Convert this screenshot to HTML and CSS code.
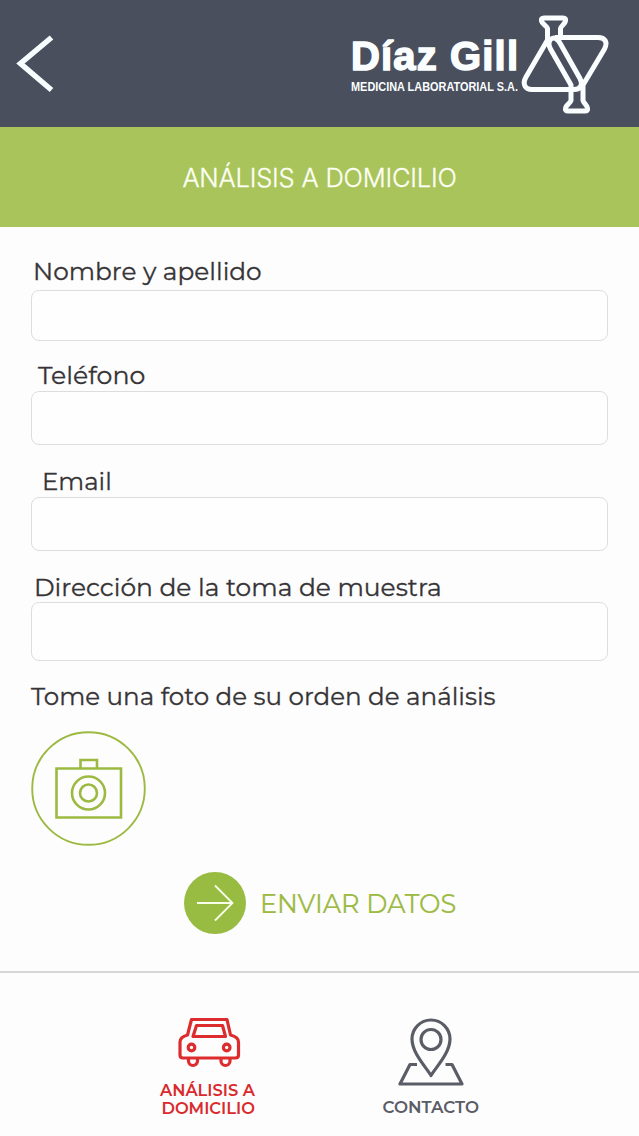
FILE: index.html
```html
<!DOCTYPE html>
<html lang="es">

<head>
    <meta charset="UTF-8">
    <meta name="viewport" content="width=device-width, initial-scale=1.0">
    <title>Análisis a domicilio</title>
    <link rel="stylesheet" href="styles.css">
</head>

<body>

    <header class="topbar">
        <a class="back" href="#" aria-label="Volver">
            <svg width="40" height="60" viewBox="0 0 40 60">
                <path d="M36.500 4.500L5.500 30.500L36.500 57" />
            </svg>
        </a>
        <svg class="logo" width="260" height="104" viewBox="0 0 260 104">
            <text class="logo_name" x="1" y="57" textLength="167" lengthAdjust="spacing">Díaz Gill</text>
            <text class="logo_sub" x="1" y="78" textLength="167" lengthAdjust="spacingAndGlyphs">MEDICINA LABORATORIAL S.A.</text>
            <!-- matraces -->
            <path d="M210.500 24V15.500C211 13 215 11 215.500 8C216 6 215 5 213 5H194C192 5 191 6 191.500 8C192 11 197 13 197.500 15.500V27L176 64C172 71 175 76.500 182 76.500H224C231 76.500 233 71 230 65.500L210.500 31C207 24 203 24 200 27C198 30 199 33 200.500 36L221 72V87.500C220.500 90 216 92 215.500 95C215 97 216 98 218 98H235C237 98 238 97 237.500 95C237 92 233.500 90 233 87.500V72L254.500 36C258 29 255 24.500 248 24.500H205" />
        </svg>
    </header>

    <h1>ANÁLISIS A DOMICILIO</h1>

    <form class="datos">
        <label class="nombre" for="nombre">Nombre y apellido</label>
        <input class="in_nombre" id="nombre" type="text">

        <label class="telefono" for="telefono">Teléfono</label>
        <input class="in_telefono" id="telefono" type="tel">

        <label class="email" for="email">Email</label>
        <input class="in_email" id="email" type="email">

        <label class="direccion" for="direccion">Dirección de la toma de muestra</label>
        <input class="in_direccion" id="direccion" type="text">

        <p class="foto_txt">Tome una foto de su orden de análisis</p>
        <button class="foto" type="button" aria-label="Tomar foto">
            <svg width="115" height="115" viewBox="0 0 115 115">
                <circle class="aro" cx="57.500" cy="57.500" r="56.300" />
                <path d="M25.500 37.500H90V86.500H25.500ZM49.500 37V29H66V37" />
                <circle cx="57.500" cy="62" r="16.500" />
                <circle cx="57.500" cy="62" r="8.500" />
            </svg>
        </button>

        <button class="enviar" type="button">
            <svg width="62" height="62" viewBox="0 0 62 62">
                <circle cx="31" cy="31" r="31" />
                <path d="M13 31H48.500M31 13.500L48.500 31L31 48.500" />
            </svg>
            <span>ENVIAR DATOS</span>
        </button>
    </form>

    <nav class="tabs">
        <a class="tab activo" href="#">
            <svg width="64" height="54" viewBox="0 0 64 54">
                <path d="M14.500 2.500H50L53.500 18Q61.500 20 61.500 25V38Q61.500 41 58.500 41H6Q3 41 3 38V25Q3 20 10.500 18ZM19.500 8.500H45.500L48.500 19.500H16ZM11.500 41V44A4.500 4.500 0 0 0 20.500 44V41M44 41V44A4.500 4.500 0 0 0 53 44V41" />
                <circle cx="14.500" cy="30.500" r="3.300" />
                <circle cx="49.700" cy="30.500" r="3.300" />
            </svg>
            <span class="tab_txt dos">ANÁLISIS A<br>DOMICILIO</span>
        </a>
        <a class="tab" href="#">
            <svg width="66" height="70" viewBox="0 0 66 70">
                <path d="M33 58.500C28 50 14 36 14 22A19 19 0 0 1 52 22C52 36 38 50 33 58.500ZM19 47.500H12L2 67H64L54 47.500H47.500" />
                <circle cx="33" cy="22.500" r="10" />
            </svg>
            <span class="tab_txt uno">CONTACTO</span>
        </a>
    </nav>

</body>

</html>
```
FILE: styles.css
```css
* {
    box-sizing: border-box;
}

body {
    margin: 0;
    height: 1136px;
    display: flex;
    flex-direction: column;
    background-color: #fefdfe;
    font-family: Montserrat, Inter, sans-serif;
    color: #363436;
}

svg {
    display: block;
    fill: none;
    flex: none;
}

button {
    padding: 0;
    border: 0;
    background-color: transparent;
    font-family: inherit;
}

a {
    text-decoration: none;
}

.topbar {
    height: 127px;
    padding: 13px 29px 0 15px;
    display: flex;
    justify-content: space-between;
    background-color: #4a4f5e;
}

.back {
    padding-top: 20px;
}

.back path {
    stroke: #f5ffff;
    stroke-width: 5.500;
}

.logo path {
    stroke: #fafeff;
    stroke-width: 5;
    stroke-linejoin: round;
}

.logo text {
    fill: #fafeff;
    font-family: "Liberation Sans", Arial, sans-serif;
    font-weight: bold;
}

.logo_name {
    font-size: 40px;
    stroke: #fafeff;
    stroke-width: 1.500;
}

.logo_sub {
    font-size: 12.500px;
}

h1 {
    margin: 0;
    height: 100px;
    line-height: 102px;
    text-align: center;
    background-color: #a9c45b;
    color: #fdfff5;
    font-family: Inter, sans-serif;
    font-size: 25.500px;
    font-weight: 300;
    letter-spacing: -0.200px;
    -webkit-text-stroke: 0.300px;
}

.datos {
    height: 744px;
    padding: 30px 31px 0;
    display: flex;
    flex-direction: column;
}

label,
.foto_txt {
    height: 30px;
    margin: 0;
    flex: none;
    font-size: 24.800px;
    line-height: 30px;
    white-space: nowrap;
    -webkit-text-stroke: 0.300px;
}

input {
    width: 577px;
    padding: 0 12px;
    flex: none;
    border: 1px solid #dfdcdf;
    border-radius: 8px;
    background-color: #fefefe;
    font-size: 24px;
}

.nombre {
    padding-left: 2px;
    margin-bottom: 3px;
    line-height: 28px;
}

.in_nombre {
    height: 51px;
    margin-bottom: 20px;
}

.telefono {
    padding-left: 7px;
    font-size: 25.200px;
    line-height: 28px;
}

.in_telefono {
    height: 54px;
    margin-bottom: 22px;
}

.email {
    padding-left: 11px;
    font-size: 24.400px;
    line-height: 28px;
}

.in_email {
    height: 54px;
    margin-bottom: 21px;
}

.direccion {
    padding-left: 3px;
    font-size: 24.950px;
}

.in_direccion {
    height: 59px;
    margin-bottom: 20px;
}

.foto_txt {
    font-size: 24.600px;
}

.foto {
    width: 115px;
    margin-top: 20px;
}

.foto svg {
    stroke: #9cba42;
    stroke-width: 2.600;
}

.foto .aro {
    stroke-width: 1.900;
}

.enviar {
    margin: 26px 0 0 153px;
    display: flex;
    align-items: center;
    gap: 14px;
    color: #9cba42;
    font-size: 25.600px;
    -webkit-text-stroke: 0.200px;
}

.enviar circle {
    fill: #98bb42;
}

.enviar path {
    stroke: #f8ffe8;
    stroke-width: 1.800;
}

.tabs {
    height: 165px;
    padding: 44px 160px 0 160px;
    display: flex;
    justify-content: space-between;
    border-top: 2px solid #d8d7d8;
}

.tab {
    display: flex;
    flex-direction: column;
    align-items: center;
    color: #5a5c66;
    font-size: 16.300px;
    font-weight: 600;
    line-height: 18px;
}

.tab svg {
    stroke: currentColor;
    stroke-width: 3.200;
    stroke-linejoin: round;
}

.activo {
    color: #d92b2d;
}

.activo svg {
    margin-left: 4px;
    stroke: #dc2c2e;
}

.dos {
    margin-top: 10px;
    text-align: right;
}

.uno {
    margin-top: 11px;
    font-size: 16.700px;
}
```
